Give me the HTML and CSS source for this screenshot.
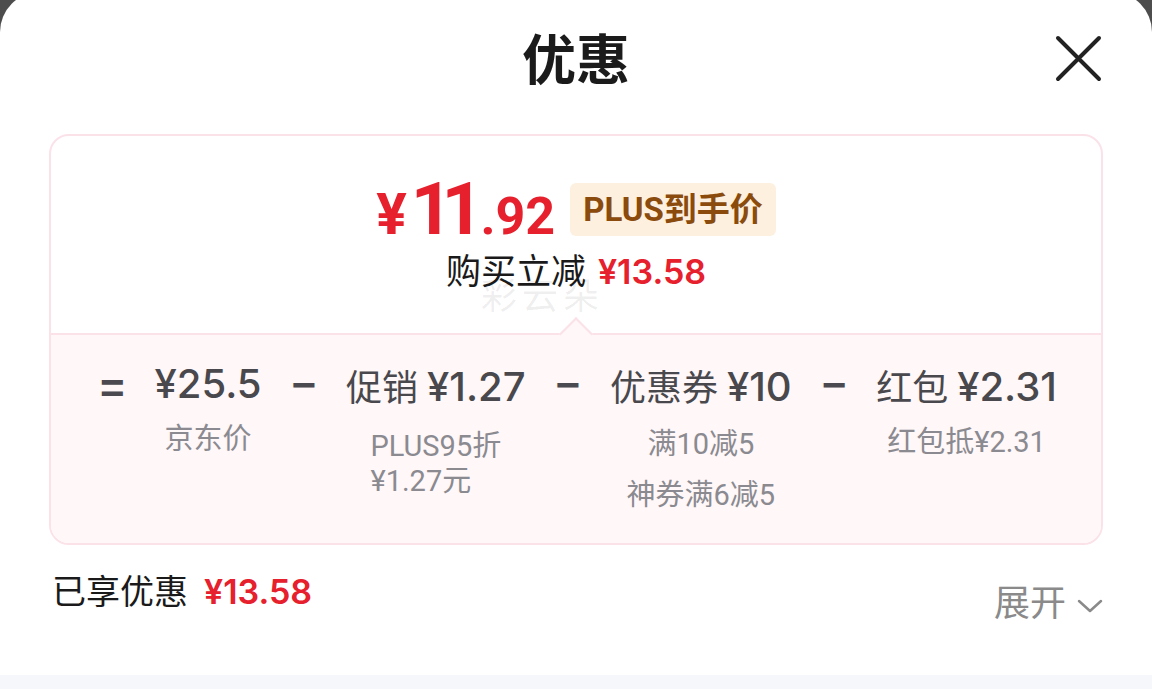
FILE: index.html
```html
<!DOCTYPE html>
<html lang="zh-CN">
<head>
<meta charset="utf-8">
<title>优惠</title>
<link rel="stylesheet" href="styles.css">
</head>
<body>
<div class="sheet">
  <header class="header">
    <h1 class="title">优惠</h1>
    <button class="close" aria-label="关闭">
      <svg width="48" height="48" viewBox="0 0 48 48"><path d="M4 3L45 44M45 3L4 44" stroke="#222" stroke-width="4" stroke-linecap="round" fill="none"/></svg>
    </button>
  </header>

  <section class="card">
    <div class="summary">
      <div class="price-row">
        <span class="price"><span class="cur">¥</span><span class="int">11</span><span class="dec">.92</span></span>
        <span class="badge">PLUS到手价</span>
      </div>
      <div class="save-row">购买立减<span class="red">¥13.58</span></div>
      <span class="watermark">彩云朵</span>
    </div>
    <div class="breakdown">
      <span class="op eq">=</span>
      <div class="item">
        <div class="item-title"><span class="num">¥25.5</span></div>
        <div class="item-sub">京东价</div>
      </div>
      <span class="op">−</span>
      <div class="item">
        <div class="item-title">促销 <span class="num">¥1.27</span></div>
        <div class="item-sub left">PLUS95折<br>¥1.27元</div>
      </div>
      <span class="op">−</span>
      <div class="item">
        <div class="item-title">优惠券 <span class="num">¥10</span></div>
        <div class="item-sub">
          <div class="line">满10减5</div>
          <div class="line second">神券满6减5</div>
        </div>
      </div>
      <span class="op">−</span>
      <div class="item">
        <div class="item-title">红包 <span class="num">¥2.31</span></div>
        <div class="item-sub">红包抵¥2.31</div>
      </div>
    </div>
  </section>

  <div class="total-row">
    <div class="total">已享优惠<span class="red">¥13.58</span></div>
    <div class="expand">展开<svg width="26" height="14" viewBox="0 0 26 14"><path d="M2 2L13 12L24 2" stroke="#8a8a8a" stroke-width="2.5" stroke-linecap="round" stroke-linejoin="round" fill="none"/></svg></div>
  </div>
</div>
<div class="strip"></div>
</body>
</html>
```

FILE: styles.css
```css
html, body {
  margin: 0;
  padding: 0;
}
body {
  width: 1152px;
  height: 689px;
  overflow: hidden;
  background: #4d4d4d;
  font-family: "Roboto", "Noto Sans CJK SC", sans-serif;
}
.sheet {
  margin-top: -8px;
  height: 683px;
  background: #fff;
  border-radius: 40px 40px 0 0;
  display: flex;
  flex-direction: column;
}
.header {
  height: 129px;
  flex-shrink: 0;
  display: grid;
  grid-template-columns: 1fr auto 1fr;
  align-items: center;
}
.title {
  grid-column: 2;
  margin: 0;
  font: 700 54px/1 "Noto Sans CJK SC", sans-serif;
  color: #1b1b1b;
}
.close {
  grid-column: 3;
  justify-self: end;
  margin: 4px 50px 0 0;
  width: 48px;
  height: 48px;
  padding: 0;
  border: 0;
  background: none;
}
.close svg { display: block; }

.card {
  margin: 13px 49px 0;
  border: 2px solid #fbe2e9;
  border-radius: 20px;
  overflow: hidden;
  flex-shrink: 0;
}
.summary {
  position: relative;
  height: 197px;
  box-sizing: border-box;
  padding-top: 38px;
  display: flex;
  flex-direction: column;
  align-items: center;
}
.price-row {
  height: 70px;
  display: flex;
  align-items: center;
  gap: 15px;
}
.price {
  display: flex;
  align-items: baseline;
  color: #e6202c;
  font-family: "Roboto", sans-serif;
  font-weight: 700;
  line-height: 1;
}
.cur { font-size: 57px; margin-right: 4px; }
.int { font-size: 73px; letter-spacing: -11px; margin-right: 8px; }
.dec { font-size: 52px; }
.badge {
  background: #fdf0df;
  color: #8a4b0d;
  font-weight: 700;
  font-size: 33px;
  line-height: 53px;
  padding: 0 13px;
  border-radius: 6px;
}
.save-row {
  margin-top: 5px;
  display: flex;
  align-items: baseline;
  gap: 12px;
  font-family: "Noto Sans CJK SC", sans-serif;
  font-size: 35px;
  line-height: 40px;
  color: #1a1a1a;
}
.red {
  font-family: "Inter", "Roboto", sans-serif;
  font-weight: 600;
  font-size: 34px;
  color: #e6202c;
}
.watermark {
  position: absolute;
  left: 430px;
  top: 131px;
  font-family: "Noto Sans CJK SC", sans-serif;
  font-size: 36px;
  letter-spacing: 5px;
  color: rgba(0, 0, 0, 0.07);
}

.breakdown {
  position: relative;
  height: 210px;
  box-sizing: border-box;
  background: #fff7f8;
  border-top: 2px solid #fbe2e9;
  padding: 24px 0 0 49px;
  display: flex;
  align-items: flex-start;
  gap: 30px;
}
.breakdown::before {
  content: "";
  position: absolute;
  left: 50%;
  top: -13px;
  width: 24px;
  height: 24px;
  margin-left: -12px;
  box-sizing: border-box;
  background: #fff7f8;
  border-top: 2px solid #fbe2e9;
  border-left: 2px solid #fbe2e9;
  transform: rotate(45deg);
}
.op {
  font-family: "Liberation Sans", sans-serif;
  font-weight: 700;
  font-size: 42px;
  line-height: 52px;
  color: #4a4a50;
}
.op.eq { margin-top: 4px; }
.item {
  display: flex;
  flex-direction: column;
  align-items: center;
  color: #48484d;
}
.item-title {
  font-size: 36px;
  white-space: nowrap;
}
.num {
  font-family: "Inter", "Roboto", sans-serif;
  font-size: 40px;
  font-weight: 500;
}
.item-sub {
  margin-top: 14px;
  font-size: 29px;
  line-height: 35px;
  color: #8a8a90;
  text-align: center;
  white-space: nowrap;
}
.item-sub.left { text-align: left; margin-top: 18px; }
.item-sub .line:first-child { margin-top: 2px; }
.item-sub .second { margin-top: 16px; }

.total-row {
  display: flex;
  justify-content: space-between;
  align-items: flex-start;
  padding: 25px 49px 0 52px;
}
.total {
  display: flex;
  align-items: baseline;
  gap: 16px;
  font-family: "Noto Sans CJK SC", sans-serif;
  font-size: 34px;
  line-height: 40px;
  color: #1a1a1a;
}
.expand {
  margin-top: 10px;
  display: flex;
  align-items: center;
  gap: 11px;
  font-family: "Noto Sans CJK SC", sans-serif;
  font-size: 36px;
  line-height: 40px;
  color: #8a8a8a;
}
.expand svg { display: block; margin-top: 12px; }
.strip {
  height: 14px;
  background: #f6f7fa;
}
```
